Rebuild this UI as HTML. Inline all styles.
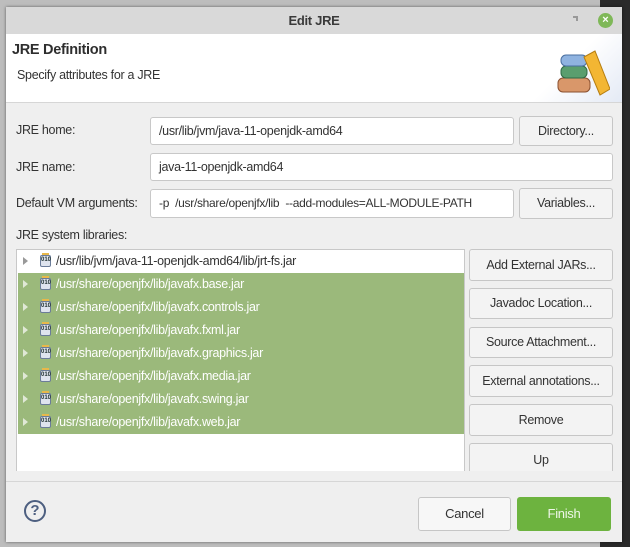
<!DOCTYPE html>
<html><head><style>
*{box-sizing:border-box;margin:0;padding:0}
body{width:630px;height:547px;overflow:hidden;background:#bdbdbd;position:relative;font-family:"Liberation Sans","DejaVu Sans",sans-serif;font-size:12.5px;color:#333}
.a{position:absolute}
#rightbg{left:600px;top:0;width:30px;height:547px;background:#2a2a2a}
#dlg{left:6px;top:7px;width:616px;height:535px;background:#efefef;overflow:hidden;box-shadow:0 0 3px rgba(0,0,0,.5)}
.t{white-space:nowrap;letter-spacing:-0.3px}
.field{background:#fff;border:1px solid #c8c8c8;border-radius:3px;padding-left:8px;line-height:26px}
.btn{background:#f3f3f3;border:1px solid #c6c6c6;border-radius:3px;text-align:center}
.row{left:1px;width:446px;height:23px;line-height:23px}
.row.g{background:#9bb97b;color:#fff}
.arr{position:absolute;left:5px;top:7px;width:0;height:0;border-left:5px solid #999;border-top:4.5px solid transparent;border-bottom:4.5px solid transparent}
.g .arr{border-left-color:#e0e8d6}
.jar{position:absolute;left:22px;top:5px;width:11px;height:12px;background:#dfe4ee;border:1px solid #6b7c99;border-radius:2px;font-size:6px;line-height:9px;text-align:center;color:#233;font-weight:bold}
.jar:before{content:"";position:absolute;left:1px;top:-3px;width:7px;height:2px;background:#e8b84a}
.rt{position:absolute;left:38px}
</style></head><body>
<div class="a" id="rightbg"></div>
<div class="a" id="dlg">
 <div class="a" style="left:0;top:0;width:616px;height:27px;background:#d9d9d9"></div>
 <div class="a t" style="left:0;width:616px;top:6px;text-align:center;font-weight:bold;font-size:13px;color:#3a3a3a">Edit JRE</div>
 <div class="a" style="left:567px;top:9px;width:5px;height:5px;border-top:2px solid #999;border-right:2px solid #999"></div>
 <div class="a" style="left:592px;top:6px;width:15px;height:15px;border-radius:50%;background:#7fb858;color:#fff;font-size:11px;font-weight:bold;text-align:center;line-height:15px">×</div>
 <div class="a" style="left:0;top:27px;width:616px;height:69px;background:#fff;border-bottom:1px solid #d6d6d6"></div>
 <div class="a" style="left:520px;top:27px;width:96px;height:68px;background:linear-gradient(135deg,#fff 45%,#e4eaf5)"></div>
 <div class="a t" style="left:6px;top:35px;font-weight:bold;font-size:14.5px;color:#2e2e2e">JRE Definition</div>
 <div class="a t" style="left:11px;top:61px">Specify attributes for a JRE</div>
 <svg class="a" style="left:542px;top:38px" width="62" height="52" viewBox="0 0 62 52">
  <rect x="10" y="33" width="32" height="14" rx="5" fill="#d9976a" stroke="#8a5030"/>
  <rect x="13" y="21" width="26" height="12" rx="5" fill="#5a9e6e" stroke="#2f6a45"/>
  <rect x="13" y="10" width="26" height="11" rx="5" fill="#8fb3e0" stroke="#4a6fa0"/>
  <path d="M36 12 L47 6 L62 44 L52 50 Z" fill="#f3b633" stroke="#b57d10"/>
 </svg>
 <div class="a t" style="left:10px;top:116px">JRE home:</div>
 <div class="a field t" style="left:144px;top:110px;width:364px;height:28px">/usr/lib/jvm/java-11-openjdk-amd64</div>
 <div class="a btn t" style="left:513px;top:109px;width:94px;height:30px;line-height:28px">Directory...</div>
 <div class="a t" style="left:10px;top:153px">JRE name:</div>
 <div class="a field t" style="left:144px;top:146px;width:463px;height:28px">java-11-openjdk-amd64</div>
 <div class="a t" style="left:10px;top:189px">Default VM arguments:</div>
 <div class="a field t" style="left:144px;top:182px;width:364px;height:29px;font-size:12px">-p &nbsp;/usr/share/openjfx/lib &nbsp;--add-modules=ALL-MODULE-PATH</div>
 <div class="a btn t" style="left:513px;top:181px;width:94px;height:31px;line-height:29px">Variables...</div>
 <div class="a t" style="left:10px;top:221px">JRE system libraries:</div>
 <div class="a" style="left:10px;top:242px;width:449px;height:240px;background:#fff;border:1px solid #c8c8c8">
  <div class="a row"><div class="arr"></div><div class="jar">010</div><span class="rt t">/usr/lib/jvm/java-11-openjdk-amd64/lib/jrt-fs.jar</span></div>
  <div class="a row g" style="top:23px"><div class="arr"></div><div class="jar">010</div><span class="rt t">/usr/share/openjfx/lib/javafx.base.jar</span></div>
  <div class="a row g" style="top:46px"><div class="arr"></div><div class="jar">010</div><span class="rt t">/usr/share/openjfx/lib/javafx.controls.jar</span></div>
  <div class="a row g" style="top:69px"><div class="arr"></div><div class="jar">010</div><span class="rt t">/usr/share/openjfx/lib/javafx.fxml.jar</span></div>
  <div class="a row g" style="top:92px"><div class="arr"></div><div class="jar">010</div><span class="rt t">/usr/share/openjfx/lib/javafx.graphics.jar</span></div>
  <div class="a row g" style="top:115px"><div class="arr"></div><div class="jar">010</div><span class="rt t">/usr/share/openjfx/lib/javafx.media.jar</span></div>
  <div class="a row g" style="top:138px"><div class="arr"></div><div class="jar">010</div><span class="rt t">/usr/share/openjfx/lib/javafx.swing.jar</span></div>
  <div class="a row g" style="top:161px"><div class="arr"></div><div class="jar">010</div><span class="rt t">/usr/share/openjfx/lib/javafx.web.jar</span></div>
 </div>
 <div class="a btn t" style="left:463px;top:242px;width:144px;height:32px;line-height:30px">Add External JARs...</div>
 <div class="a btn t" style="left:463px;top:281px;width:144px;height:31px;line-height:29px">Javadoc Location...</div>
 <div class="a btn t" style="left:463px;top:320px;width:144px;height:31px;line-height:29px">Source Attachment...</div>
 <div class="a btn t" style="left:463px;top:358px;width:144px;height:32px;line-height:30px">External annotations...</div>
 <div class="a btn t" style="left:463px;top:397px;width:144px;height:32px;line-height:30px">Remove</div>
 <div class="a btn t" style="left:463px;top:436px;width:144px;height:36px;line-height:32px">Up</div>
 <div class="a" style="left:0;top:464px;width:616px;height:71px;background:#efefef"></div>
 <div class="a" style="left:0;top:474px;width:616px;height:1px;background:#d6d6d6"></div>
 <div class="a" style="left:18px;top:493px;width:22px;height:22px;border:2px solid #4d5f80;border-radius:50%;color:#4d5f80;font-weight:bold;font-size:15px;text-align:center;line-height:18px">?</div>
 <div class="a btn t" style="left:412px;top:490px;width:93px;height:34px;line-height:32px;background:#f7f7f7;font-size:13px">Cancel</div>
 <div class="a t" style="left:511px;top:490px;width:94px;height:34px;line-height:34px;background:#6db33f;border-radius:3px;color:#eef6e8;text-align:center;font-size:13px">Finish</div>
</div>
</body></html>
